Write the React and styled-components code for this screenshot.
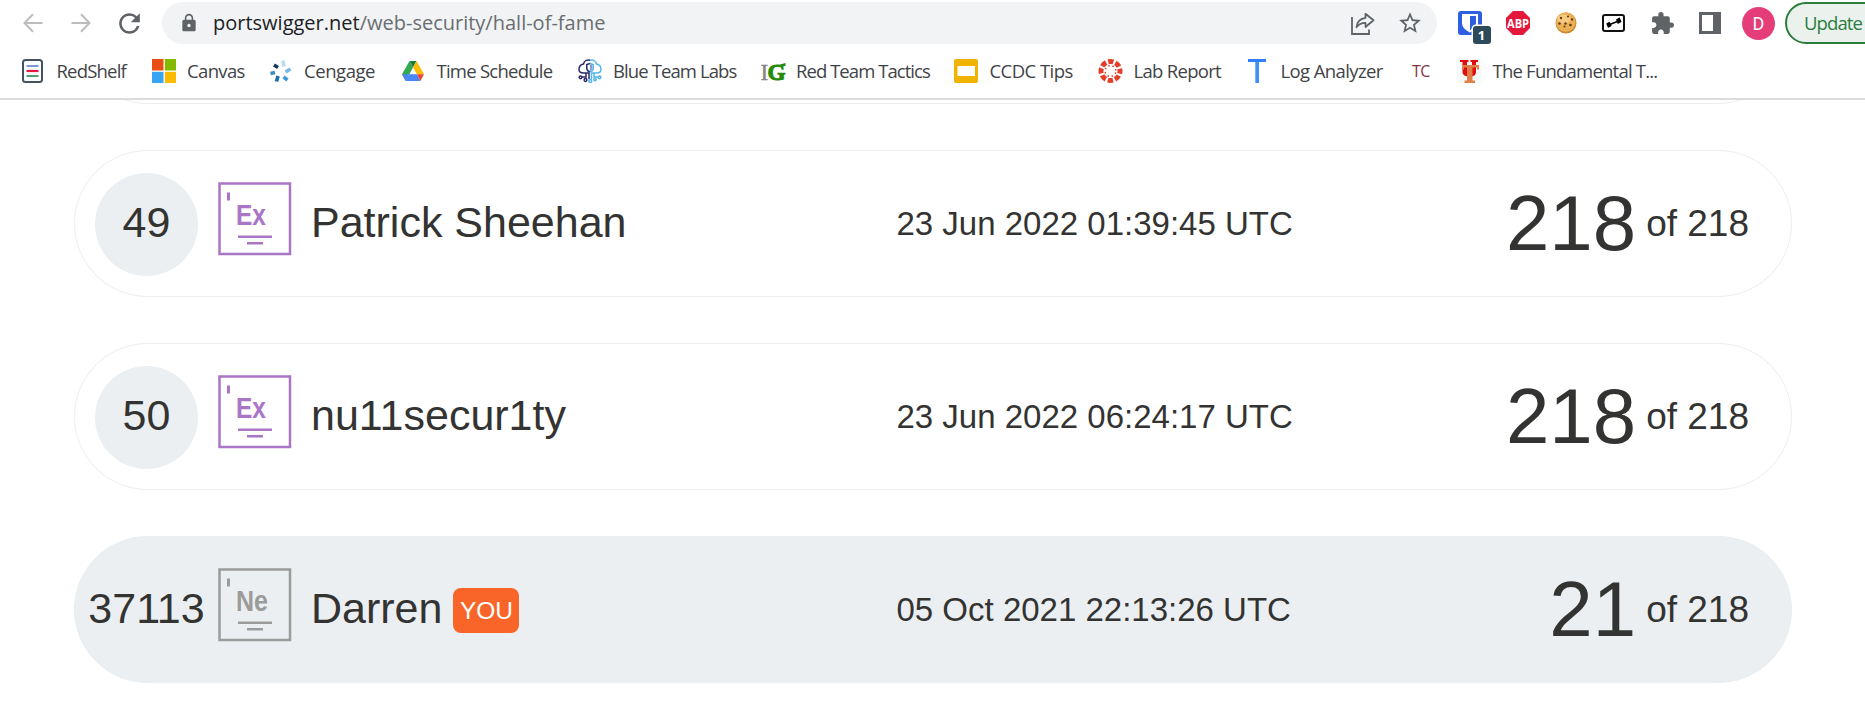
import React from "react";
import styled, { createGlobalStyle } from "styled-components";
import { MdStarBorder, MdLock, MdRefresh, MdExtension } from "react-icons/md";

const GlobalStyle = createGlobalStyle`
  * { box-sizing: border-box; }
  body { margin: 0; background: #fff; overflow: hidden; }
`;

const ui = `"Open Sans", "Noto Sans", sans-serif`;

const Page = styled.div`
  display: flex;
  flex-direction: column;
  width: 100%;
  height: 720px;
  overflow: hidden;
  font-family: "Liberation Sans", Arial, sans-serif;
  color: #333332;
`;

const Chrome = styled.header`
  flex: none;
  height: 100px;
  border-bottom: 2px solid #dcdcdc;
  font-family: ${ui};
`;

const Toolbar = styled.div`
  display: flex;
  align-items: center;
  height: 46px;
  padding-left: 23px;
  overflow: hidden;
`;

const Nav = styled.div`
  display: grid;
  grid-template-columns: 48px 43px 31px;
  align-items: center;
  width: 139px;
  flex: none;
`;

const AddressBar = styled.div`
  display: flex;
  align-items: center;
  flex: none;
  width: 1275px;
  height: 42px;
  padding: 0 14px 0 17px;
  border-radius: 21px;
  background: #f1f3f4;
  color: #5f6368;
`;

const Url = styled.span`
  flex: 1;
  margin-left: 14px;
  font-size: 20px;
  line-height: 42px;
  white-space: nowrap;
  color: #6a6e72;
  b { font-weight: 400; color: #202124; }
`;

const AddressActions = styled.div`
  display: flex;
  align-items: center;
  gap: 22px;
`;

const Extensions = styled.div`
  display: flex;
  align-items: center;
  flex: none;
  width: 305px;
  padding-left: 20.5px;
  gap: 24.8px;
  svg { flex: none; }
`;

const VaultIcon = styled.span`
  position: relative;
  display: flex;
`;

const Count = styled.span`
  position: absolute;
  left: 15px;
  top: 15px;
  width: 18px;
  height: 18px;
  border-radius: 3px;
  box-shadow: 0 0 0 1.5px #fff;
  background: #2c4a5a;
  color: #fff;
  font-size: 13px;
  font-weight: 700;
  line-height: 19px;
  text-align: center;
`;

const Avatar = styled.div`
  width: 33px;
  height: 33px;
  border-radius: 50%;
  background: #e43d7a;
  color: #fff;
  font-family: Roboto, sans-serif;
  font-size: 18px;
  line-height: 34px;
  text-align: center;
  flex: none;
`;

const Update = styled.div`
  flex: none;
  width: 120px;
  height: 42px;
  margin-left: 10px;
  padding-left: 17px;
  border: 2px solid #2b7d3e;
  border-radius: 21px;
  background: #ebf2ed;
  color: #2b7d3e;
  font-size: 18.5px;
  line-height: 38px;
  letter-spacing: -0.9px;
`;

const Bookmarks = styled.nav`
  display: flex;
  align-items: center;
  height: 50px;
  padding-left: 22px;
`;

const Bookmark = styled.a`
  display: flex;
  align-items: center;
  flex: none;
  width: ${(p) => p.$width}px;
  svg { flex: none; }
`;

const BookmarkLabel = styled.span`
  margin: -1px 0 0 ${(p) => p.$gap}px;
  font-size: 18.5px;
  line-height: 26px;
  letter-spacing: ${(p) => p.$track}px;
  color: #3f4347;
  white-space: nowrap;
`;

const TextIcon = styled.span`
  font-size: 16px;
  line-height: 26px;
  letter-spacing: -0.5px;
  color: #86343f;
`;

const Board = styled.main`
  display: flex;
  flex-direction: column;
  justify-content: flex-end;
  gap: 46px;
  flex: 1;
  min-height: 0;
  padding: 0 73px 37px 74px;
  overflow: hidden;
`;

const Entry = styled.section`
  display: flex;
  align-items: center;
  flex: none;
  height: 147px;
  padding: 0 42px 0 20px;
  border: 1px solid #eaeef1;
  border-radius: 74px;
  background: ${(p) => (p.$own ? "#ebeff2" : "#fff")};
`;

const Rank = styled.div`
  width: 103px;
  height: 103px;
  flex: none;
  display: flex;
  justify-content: center;
  margin-top: 1px;
  border-radius: 50%;
  background: #ebeff2;
  font-size: 43px;
  line-height: 99px;
`;

const Level = styled.svg`
  flex: none;
  width: 74px;
  height: 74px;
  margin: -9px 0 0 20px;
  color: ${(p) => p.$tone};
`;

const Name = styled.div`
  display: flex;
  align-items: center;
  width: 604.5px;
  flex: none;
  padding-left: 19px;
  font-size: 43px;
  line-height: 50px;
  margin-top: -4px;
  white-space: nowrap;
`;

const You = styled.span`
  width: 66px;
  height: 45px;
  margin: 6px 0 0 11px;
  border-radius: 8px;
  background: #f96528;
  color: #fff;
  font-size: 24.5px;
  line-height: 45px;
  text-align: center;
`;

const Time = styled.time`
  flex: 1;
  font-size: 33px;
  line-height: 38px;
  white-space: nowrap;
`;

const Score = styled.div`
  display: flex;
  align-items: center;
  white-space: nowrap;
`;

const Solved = styled.span`
  font-size: 78px;
  line-height: 90px;
  margin-top: -2px;
`;

const Total = styled.span`
  margin-left: 10px;
  font-size: 37px;
  line-height: 42px;
`;

const Arrow = ({ flip }) => (
  <svg width="20" height="20" viewBox="0 0 20 20" fill="none" stroke="#babcbe" strokeWidth="2" transform={flip ? "scale(-1 1)" : undefined}>
    <path d="M19.5 10H1.7M10 1.2 1.5 10l8.5 8.8" />
  </svg>
);

const Share = () => (
  <svg width="24" height="23" viewBox="0 0 24 23" fill="none" stroke="#5f6368" strokeWidth="1.8">
    <path d="M1 5v17h17v-4.5" />
    <path d="M14.500 1.800 22.500 8.300 14.500 15v-4.100c-4 0-6.800 1.200-9 4.300.6-5.200 3.600-8.600 9-9.300z" strokeLinejoin="round" />
  </svg>
);

const Shield = () => (
  <svg width="24" height="24" viewBox="0 0 24 24">
    <rect width="24" height="24" rx="3" fill="#2e5fe0" />
    <path d="M4 3h16v9c0 4.500-4 7.500-8 9.500C8 19.500 4 16.500 4 12z" fill="#fff" />
    <path d="M12 5h6v7c0 3.200-3 5.600-6 7.200z" fill="#2e5fe0" />
  </svg>
);

const AdBlock = () => (
  <svg width="24" height="24" viewBox="0 0 24 24">
    <path d="M7 0h10l7 7v10l-7 7H7l-7-7V7z" fill="#e4173c" />
    <text x="12" y="16.500" textAnchor="middle" textLength="22" lengthAdjust="spacingAndGlyphs" fontFamily="Open Sans" fontWeight="700" fontSize="13" fill="#fff">ABP</text>
  </svg>
);

const Cookie = () => (
  <svg width="22" height="22" viewBox="0 0 22 22">
    <circle cx="11" cy="11" r="10.500" fill="#cf8730" />
    <circle cx="10.800" cy="10" r="9.800" fill="#eab055" />
    <ellipse cx="9" cy="7" rx="6.500" ry="4.500" fill="#f4cb80" />
    <g fill="#6b3a12">
      <circle cx="6" cy="6" r="1.200" /><circle cx="13" cy="4.500" r="1.100" /><circle cx="10.500" cy="11.500" r="1.200" />
      <circle cx="17" cy="7.500" r="1.200" /><circle cx="4.500" cy="11.500" r="1.200" /><circle cx="15.500" cy="13" r="1.300" /><circle cx="9.500" cy="14.500" r="1" />
    </g>
  </svg>
);

const Dumbbell = () => (
  <svg width="23" height="18" viewBox="0 0 23 18">
    <rect x="1" y="1" width="21" height="16" rx="2" fill="#fff" stroke="#111" strokeWidth="2" />
    <path d="M7.500 10.500 15.500 7.500" stroke="#000" strokeWidth="1.600" />
    <path d="M4.200 9.500 6 8.500l1.500-.8 2.200 3.500-1.200 1.500-2.500 1.100zM14 5.500l2.500-1.500 1-.8 2 4.300-1.300 1.200-2.400 1.300z" fill="#000" />
  </svg>
);

const Panel = () => (
  <svg width="22" height="22" viewBox="0 0 22 22">
    <path fillRule="evenodd" d="M0 0h22v22H0zM3 3v16h11V3z" fill="#5f6368" />
  </svg>
);

const Shelf = () => (
  <svg width="21" height="24" viewBox="0 0 21 24">
    <rect x="1" y="1" width="19" height="22" rx="2.500" fill="#fff" stroke="#435363" strokeWidth="2" />
    <path d="M4.500 7h12" stroke="#7a9bd4" strokeWidth="2" />
    <path d="M4.500 12h12" stroke="#e5173f" strokeWidth="2.200" />
    <path d="M4.500 17h12" stroke="#4da277" strokeWidth="2" />
  </svg>
);

const Windows = () => (
  <svg width="24" height="24" viewBox="0 0 24 24">
    <path d="M0 0h11.500v11.500H0z" fill="#e84f15" /><path d="M12.800 0H24v11.500H12.800z" fill="#84b900" />
    <path d="M0 12.800h11.500V24H0z" fill="#3aa4f4" /><path d="M12.800 12.800H24V24H12.800z" fill="#f9ba00" />
  </svg>
);

const Burst = () => (
  <svg width="22" height="22" viewBox="0 0 22 22" strokeWidth="3.600" fill="none">
    <path d="M13 .5l.8 6" stroke="#b9dcf3" />
    <path d="M15.500 12l5-3" stroke="#76bce6" />
    <path d="M13.500 17l4 3" stroke="#3f9bd4" />
    <path d="M8 16l-1.500 5.500" stroke="#1c6ea8" />
    <path d="M.5 13.500l4.500-1" stroke="#3d8cc0" />
    <path d="M4 5l4 2.500" stroke="#15385c" />
  </svg>
);

const Drive = () => (
  <svg width="22" height="20" viewBox="0 0 22 20">
    <path d="M7.500 0 0 13.200 3.700 20 11 6.500z" fill="#33a852" />
    <path d="M7.500 0H14.500L11 6.500z" fill="#188038" />
    <path d="M14.500 0 22 13.200H15L11 6.500z" fill="#fbbc04" />
    <path d="M3.700 20 7.300 13.200H15L18.300 20z" fill="#4a86f5" />
    <path d="M0 13.200H7.300L3.700 20z" fill="#4a86f5" />
    <path d="M15 13.200H22L18.300 20z" fill="#ea4335" />
  </svg>
);

const Cloud = () => (
  <svg width="24" height="24" viewBox="0 0 24 24" fill="none" strokeWidth="1.500">
    <g stroke="#29296b">
      <path d="M12 1.200C8.500.5 6 2.500 5.500 5 2.500 5.500 1 8 1 10.500c0 2.500 2 3.500 4.500 3.500H11v6" />
      <path d="M12 4.500 8.800 5.500v4c0 1.500 1.200 2.800 3.200 3.500" />
      <path d="M8 14v4H4" /><circle cx="2.500" cy="18.300" r="1.400" /><circle cx="7.500" cy="21" r="1.400" />
    </g>
    <path d="M12 5.500h2.300v4c0 1-1 1.800-2.300 2.500z" fill="#8a97c4" />
    <g stroke="#55b6ea">
      <path d="M12 1.200c3.500-.700 6 1.300 6.500 3.800 3 .5 4.500 3 4.500 5.500 0 2.500-2 3.500-4.500 3.500H13.500v6" />
      <path d="M12 4.500l3.200 1v4c0 1.500-1.200 2.800-3.200 3.500" />
      <path d="M16 14v4h4" /><circle cx="21.500" cy="18.300" r="1.400" /><circle cx="12.300" cy="22" r="1.400" /><circle cx="17" cy="20.500" r="1.200" />
    </g>
  </svg>
);

const IgIcon = () => (
  <svg width="25" height="24" viewBox="0 0 25 24">
    <text x="-0.500" y="21" fontFamily="Liberation Serif" fontSize="23" fill="#858585" stroke="#858585" strokeWidth=".5">I</text>
    <text x="6.500" y="20.500" textLength="18" lengthAdjust="spacingAndGlyphs" fontFamily="Liberation Serif" fontWeight="700" fontSize="23" fill="#248a08" stroke="#248a08">G</text>
    <path d="M19 5.500 24.500 4v3h-4z" fill="#248a08" />
  </svg>
);

const Slides = () => (
  <svg width="24" height="24" viewBox="0 0 24 24">
    <rect width="24" height="24" rx="2" fill="#f0b400" /><path d="M3.500 7h17.500v10H3.500z" fill="#fff" />
  </svg>
);

const CanvasRing = () => (
  <svg width="25" height="24" viewBox="0 0 25 24">
    <circle cx="12.500" cy="12" r="9.500" fill="none" stroke="#e13f2b" strokeWidth="5" strokeDasharray="5.300 2.160" strokeDashoffset="2.650" />
    <circle cx="12.500" cy="12" r="5.400" fill="none" stroke="#e13f2b" strokeWidth="1.500" strokeDasharray="1.500 2.740" strokeDashoffset="-1.400" />
  </svg>
);

const TallT = () => (
  <svg width="18" height="24" viewBox="0 0 18 24">
    <path d="M0 0h18v3H0z" fill="#2f7ff8" /><path d="M7.300 3h3.700v21H7.300z" fill="#3f90fb" />
  </svg>
);

const Utah = () => (
  <svg width="24" height="24" viewBox="0 0 24 24">
    <path d="M0 0h24v24H0z" fill="#f7faf6" />
    <path d="M3 1h8.500v2H10v9c0 1.500.8 2.300 2.500 2.300S15 13.500 15 12V3h-1.500V1H21v2h-2v10c0 3.200-2.500 4.500-6.500 4.500S5.500 16.200 5.500 13V3H3z" fill="#e00c10" />
    <path d="M5 6h17v4.500h-2V8.500h-4.500V21.500h2.500V24H7.500v-2.500H10V8.500H7v2H5z" fill="#df7f48" />
  </svg>
);

const LevelBadge = ({ label, tone }) => (
  <Level viewBox="0 0 74 74" $tone={tone}>
    <rect x="1.500" y="1.500" width="70.500" height="70.500" fill="none" stroke="currentColor" strokeWidth="2.500" />
    <path d="M9 10.500h3v8H9zM20 53.500h34v2.500H20zM29 60h16v2.500H29z" fill="currentColor" />
    <text x="18" y="42.500" textLength={label === "Ex" ? 30 : 32} lengthAdjust="spacingAndGlyphs" fontFamily="Liberation Sans" fontWeight="700" fontSize="30" fill="currentColor">{label}</text>
  </Level>
);

const bookmarks = [
  { icon: <Shelf />, label: "RedShelf", width: 130, gap: 13.5, track: -0.8 },
  { icon: <Windows />, label: "Canvas", width: 118, gap: 11, track: -0.65 },
  { icon: <Burst />, label: "Cengage", width: 132, gap: 12, track: -0.45 },
  { icon: <Drive />, label: "Time Schedule", width: 176, gap: 12.5, track: -0.75 },
  { icon: <Cloud />, label: "Blue Team Labs", width: 182.5, gap: 11, track: -0.9 },
  { icon: <IgIcon />, label: "Red Team Tactics", width: 193.5, gap: 10.5, track: -0.95 },
  { icon: <Slides />, label: "CCDC Tips", width: 143.5, gap: 11.5, track: -0.55 },
  { icon: <CanvasRing />, label: "Lab Report", width: 150.5, gap: 11, track: -0.7 },
  { icon: <TallT />, label: "Log Analyzer", width: 164, gap: 14.5, track: -0.6 },
  { icon: <TextIcon>TC</TextIcon>, label: "", width: 45, gap: 0, track: 0 },
  { icon: <Utah />, label: "The Fundamental T...", width: 210, gap: 11.5, track: -0.78 },
];

const entries = [
  { rank: "48", name: "", level: "Ex", time: "", solved: "" },
  { rank: "49", name: "Patrick Sheehan", level: "Ex", time: "23 Jun 2022 01:39:45 UTC", solved: 218 },
  { rank: "50", name: "nu11secur1ty", level: "Ex", time: "23 Jun 2022 06:24:17 UTC", solved: 218 },
  { rank: "37113", name: "Darren", level: "Ne", time: "05 Oct 2021 22:13:26 UTC", solved: 21, own: true },
];

export default function App() {
  return (
    <Page>
      <GlobalStyle />
      <Chrome>
        <Toolbar>
          <Nav>
            <Arrow />
            <Arrow flip />
            <MdRefresh size={31} color="#5f6368" />
          </Nav>
          <AddressBar>
            <MdLock size={20} />
            <Url><b>portswigger.net</b>/web-security/hall-of-fame</Url>
            <AddressActions>
              <Share />
              <MdStarBorder size={26} />
            </AddressActions>
          </AddressBar>
          <Extensions>
            <VaultIcon><Shield /><Count>1</Count></VaultIcon>
            <AdBlock />
            <Cookie />
            <Dumbbell />
            <MdExtension size={25} color="#5f6368" />
            <Panel />
          </Extensions>
          <Avatar>D</Avatar>
          <Update>Update</Update>
        </Toolbar>
        <Bookmarks>
          {bookmarks.map((b, i) => (
            <Bookmark key={i} $width={b.width}>
              {b.icon}
              {b.label && <BookmarkLabel $gap={b.gap} $track={b.track}>{b.label}</BookmarkLabel>}
            </Bookmark>
          ))}
        </Bookmarks>
      </Chrome>
      <Board>
        {entries.map((e) => (
          <Entry key={e.rank} $own={e.own}>
            {e.name && (
              <>
                <Rank>{e.rank}</Rank>
                <LevelBadge label={e.level} tone={e.own ? "#9b9b99" : "#ab75c6"} />
                <Name>{e.name}{e.own && <You>YOU</You>}</Name>
                <Time>{e.time}</Time>
                <Score><Solved>{e.solved}</Solved><Total>of 218</Total></Score>
              </>
            )}
          </Entry>
        ))}
      </Board>
    </Page>
  );
}
